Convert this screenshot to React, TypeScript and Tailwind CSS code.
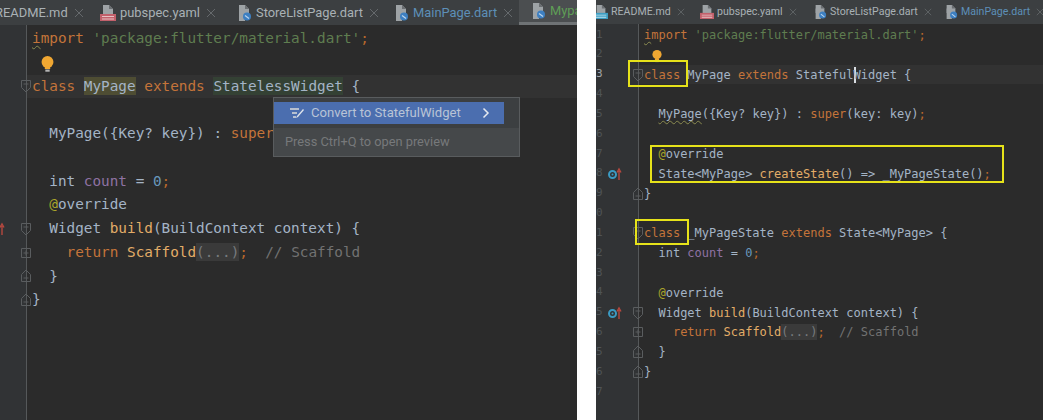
import type { ReactNode } from 'react'

const Kw = ({ children }: { children: ReactNode }) => <span className="text-[#c4743a]">{children}</span>
const Fn = ({ children }: { children: ReactNode }) => <span className="text-[#e3ad68]">{children}</span>
const Str = ({ children }: { children: ReactNode }) => <span className="text-[#5f7d50]">{children}</span>
const Semi = () => <span className="text-[#b8692c]">;</span>
const At = () => <span className="text-[#a9a52b]">@</span>
const Field = ({ children }: { children: ReactNode }) => <span className="text-[#8f72a3]">{children}</span>
const Num = ({ children }: { children: ReactNode }) => <span className="text-[#6897bb]">{children}</span>
const Squiggle = ({ children }: { children: ReactNode }) => (
  <span className="underline decoration-wavy decoration-[#8a8a50] decoration-1 underline-offset-2">{children}</span>
)

type FoldKind = 'open' | 'close' | 'plus'

function Fold({ kind }: { kind: FoldKind }) {
  return (
    <svg width="12" height="14" viewBox="0 0 12 14" fill="none" stroke="#5a5d5f" strokeWidth="1">
      {kind === 'open' && <path d="M1.5 1.5h9v7l-4.500 4.500-4.500-4.500z" />}
      {kind === 'close' && <path d="M1.500 12.500h9v-7l-4.500-4.500-4.500 4.500z" />}
      {kind === 'plus' && <path d="M1.500 2.500h9v9h-9z" />}
      {kind === 'open' && <path d="M3.500 5h5" />}
      {kind === 'close' && <path d="M3.500 9h5" />}
      {kind === 'plus' && <path d="M3.500 7h5M6 4.500v5" />}
    </svg>
  )
}

function Bulb({ size }: { size: number }) {
  return (
    <svg width={size} height={size * 1.25} viewBox="0 0 12 15" className="inline-block align-middle">
      <circle cx="6" cy="5.500" r="5.500" fill="#f0a732" />
      <path d="M3.500 10h5v2h-5z" fill="#f0a732" />
      <path d="M4 12.500h4v2h-4z" fill="#b5b5b5" />
    </svg>
  )
}

function OverrideMark() {
  return (
    <svg width="14" height="14" viewBox="0 0 14 14">
      <circle cx="4.500" cy="7.500" r="3.500" fill="none" stroke="#3b9ac2" strokeWidth="2" />
      <circle cx="4.500" cy="7.500" r="1" fill="#3b9ac2" />
      <path d="M11 13V4M9 5.500 11 2l2 3.500" fill="none" stroke="#b5483f" strokeWidth="1.400" />
    </svg>
  )
}

function CloseX({ size }: { size: number }) {
  return (
    <svg width={size} height={size} viewBox="0 0 10 10" fill="none" stroke="#65696c" strokeWidth="1" className="shrink-0">
      <path d="M1 1l8 8M9 1l-8 8" />
    </svg>
  )
}

function FileIcon({ kind, size }: { kind: 'dart' | 'yml' | 'md'; size: number }) {
  return (
    <svg width={size} height={size} viewBox="0 0 16 16" className="shrink-0">
      <path d="M3 0h6l4 4v5H3z" fill="#9ea3a6" />
      <path d="M9 0v4h4z" fill="#6b6f72" />
      {kind === 'dart' && (
        <>
          <path d="M3 4h6v12H3z" fill="#9ea3a6" />
          <circle cx="11" cy="11.500" r="4" fill="#3d7fc1" />
          <path d="M9 10.500l4 3" stroke="#bcd6ee" strokeWidth="1.200" />
        </>
      )}
      {kind === 'yml' && (
        <>
          <path d="M0 9h16v7H0z" fill="#c2606b" />
          <path d="M2 11h12v1H2zM2 13.500h12v1H2z" fill="#e9c0c4" />
        </>
      )}
      {kind === 'md' && (
        <>
          <path d="M0 9h16v7H0z" fill="#3f9fc4" />
          <path d="M2 11h12v1H2zM2 13.500h12v1H2z" fill="#bfe3f0" />
        </>
      )}
    </svg>
  )
}

type Tab = {
  name: string
  icon: 'dart' | 'yml' | 'md'
  color?: string
  width: number
  closable?: boolean
  active?: boolean
}

function TabBar({ tabs, big, offset }: { tabs: Tab[]; big?: boolean; offset: number }) {
  return (
    <div
      className={`flex shrink-0 overflow-hidden bg-[#3c3f41] font-['Roboto',sans-serif] ${
        big ? 'h-[25px] text-[12.900px]' : 'h-[24px] text-[10.600px]'
      }`}
    >
      <div className="flex shrink-0" style={{ marginLeft: offset }}>
        {tabs.map((t) => (
          <div
            key={t.name}
            className={`flex shrink-0 items-center ${t.active ? 'border-b-[3px] border-[#6f7375] bg-[#4b4e50] pl-[11px]' : ''}`}
            style={{ width: t.width }}
          >
            <FileIcon kind={t.icon} size={big ? 16 : 14} />
            <span className={`whitespace-nowrap ${big ? 'ml-[4px]' : 'ml-[3px]'} ${t.color ?? 'text-[#a9b1b5]'}`}>{t.name}</span>
            {t.closable && (
              <span className="ml-[6px] flex">
                <CloseX size={big ? 10 : 8} />
              </span>
            )}
          </div>
        ))}
      </div>
    </div>
  )
}

type Row = {
  num?: string
  bright?: boolean
  mark?: boolean
  fold?: FoldKind
  current?: boolean
  code?: ReactNode
}

function CodeRows({
  rows,
  gutter,
  rowClass,
  topGap,
  numbers,
  cutMark,
}: {
  rows: Row[]
  gutter: string
  rowClass: string
  topGap: string
  numbers?: boolean
  cutMark?: boolean
}) {
  return (
    <div className="flex min-h-0 flex-1 flex-col font-['DejaVu_Sans_Mono',monospace] text-[#a4b4c6]">
      <div className="flex shrink-0">
        <div className={`shrink-0 border-r border-[#55585a] bg-[#313335] ${gutter} ${topGap}`} />
      </div>
      {rows.map((r, i) => (
        <div key={i} className={`flex shrink-0 ${rowClass} ${r.current ? 'bg-[#323232]' : ''}`}>
          <div className={`relative flex shrink-0 items-center border-r border-[#55585a] bg-[#313335] ${gutter}`}>
            {numbers && (
              <span className={`w-[13px] text-[11px] ${r.bright ? 'text-[#a4a8aa]' : 'text-[#4f5355]'}`}>{r.num}</span>
            )}
            {r.mark && (
              <span className={`flex ${cutMark ? 'absolute left-[-9px]' : 'absolute left-[12px]'}`}>
                <OverrideMark />
              </span>
            )}
            {r.fold && (
              <span className="absolute right-[-6px] flex">
                <Fold kind={r.fold} />
              </span>
            )}
          </div>
          <div className="flex items-center pl-[5px]">
            <span className="whitespace-pre">{r.code}</span>
          </div>
        </div>
      ))}
      <div className="flex min-h-0 flex-1">
        <div className={`shrink-0 border-r border-[#55585a] bg-[#313335] ${gutter}`} />
      </div>
    </div>
  )
}

const leftRows: Row[] = [
  { code: <><Kw><Squiggle>i</Squiggle>mport</Kw> <Str>'package:flutter/material.dart'</Str><Semi /></> },
  { code: <span className="ml-[9px] inline-flex translate-y-[5px]"><Bulb size={13} /></span> },
  {
    current: true,
    fold: 'open',
    code: (
      <>
        <Kw>class</Kw> <span className="bg-[#4e4d33] py-[1px]">MyPage</span> <Kw>extends</Kw>{' '}
        <span className="bg-[#344134] py-[1px]">StatelessWidget</span> {'{'}
      </>
    ),
  },
  {},
  { code: <>{'  '}MyPage({'{'}Key? key{'}'}) : <Kw>super</Kw></> },
  {},
  { code: <>{'  '}int <Field>count</Field> = <Num>0</Num><Semi /></> },
  { code: <>{'  '}<At />override</> },
  {
    mark: true,
    fold: 'open',
    code: <>{'  '}Widget <Fn>build</Fn>(BuildContext context) {'{'}</>,
  },
  {
    fold: 'plus',
    code: (
      <>
        {'    '}<Kw>return</Kw> <Fn>Scaffold</Fn>
        <span className="bg-[#3a3a3a] py-[1px] text-[#777b7e]">(...)</span><Semi />{'  '}
        <span className="text-[#727272]">// Scaffold</span>
      </>
    ),
  },
  { fold: 'close', code: <>{'  }'}</> },
  { fold: 'close', code: <>{'}'}</> },
]

const rightRows: Row[] = [
  { num: '1', code: <><Kw><Squiggle>i</Squiggle>mport</Kw> <Str>'package:flutter/material.dart'</Str><Semi /></> },
  { num: '2', code: <span className="ml-[8px] inline-flex translate-y-[4px]"><Bulb size={10} /></span> },
  {
    num: '3',
    bright: true,
    current: true,
    fold: 'open',
    code: (
      <>
        <Kw>class</Kw> MyPage <Kw>extends</Kw> Stateful
        <span className="-mr-[2px] inline-block h-[16px] w-0 border-l-2 border-[#d8dde2] align-middle" />
        Widget {'{'}
      </>
    ),
  },
  { num: '4' },
  { num: '5', code: <>{'  '}<Squiggle>MyPage</Squiggle>({'{'}Key? key{'}'}) : <Kw>super</Kw>(key: key)<Semi /></> },
  { num: '6' },
  { num: '7', code: <>{'  '}<At />override</> },
  { num: '8', mark: true, code: <>{'  '}State&lt;MyPage&gt; <Fn>createState</Fn>() =&gt; _MyPageState()<Semi /></> },
  { num: '9', fold: 'close', code: <>{'}'}</> },
  { num: '0' },
  { num: '1', fold: 'open', code: <><Kw>class</Kw> _MyPageState <Kw>extends</Kw> State&lt;MyPage&gt; {'{'}</> },
  { num: '2', code: <>{'  '}int <Field>count</Field> = <Num>0</Num><Semi /></> },
  { num: '3' },
  { num: '4', code: <>{'  '}<At />override</> },
  { num: '5', mark: true, fold: 'open', code: <>{'  '}Widget <Fn>build</Fn>(BuildContext context) {'{'}</> },
  {
    num: '6',
    fold: 'plus',
    code: (
      <>
        {'    '}<Kw>return</Kw> <Fn>Scaffold</Fn>
        <span className="bg-[#3a3a3a] py-[1px] text-[#777b7e]">(...)</span><Semi />{'  '}
        <span className="text-[#727272]">// Scaffold</span>
      </>
    ),
  },
  { num: '5', fold: 'close', code: <>{'  }'}</> },
  { num: '6', fold: 'close', code: <>{'}'}</> },
  { num: '7' },
]

const leftTabs: Tab[] = [
  { name: 'README.md', icon: 'md', width: 125, closable: true },
  { name: 'pubspec.yaml', icon: 'yml', width: 136, closable: true },
  { name: 'StoreListPage.dart', icon: 'dart', width: 157, closable: true },
  { name: 'MainPage.dart', icon: 'dart', width: 126, color: 'text-[#5d8fb8]', closable: true },
  { name: 'Mypage.dart', icon: 'dart', width: 100, color: 'text-[#5f9e56]', active: true },
]

const rightTabs: Tab[] = [
  { name: 'README.md', icon: 'md', width: 106, closable: true },
  { name: 'pubspec.yaml', icon: 'yml', width: 113, closable: true },
  { name: 'StoreListPage.dart', icon: 'dart', width: 131, closable: true },
  { name: 'MainPage.dart', icon: 'dart', width: 110, color: 'text-[#5d8fb8]', closable: true },
]

function IntentionPopup() {
  return (
    <div className="absolute left-[273px] top-[97px] w-[247px] border border-[#595c5e] bg-[#3c3f41] font-['Roboto',sans-serif]">
      <div className="py-[4px]">
        <div className="flex h-[22px] w-[230px] items-center bg-[#4b6eaf] text-[13.100px] text-[#b9c4d6]">
          <svg width="14" height="12" viewBox="0 0 14 12" className="ml-[16px] shrink-0">
            <path d="M0 1h9v2H0zM2 5h5v2H2zM3 9h3v2H3z" fill="#b7c0cf" />
            <path d="M7 9l6-7 1 1-6 7-2 1z" fill="#dfe4ec" />
          </svg>
          <span className="ml-[7px] whitespace-nowrap">Convert to StatefulWidget</span>
          <svg width="8" height="12" viewBox="0 0 8 12" className="ml-auto mr-[14px] shrink-0" fill="none" stroke="#e6eaf0" strokeWidth="1.500">
            <path d="M1.500 1.500 6 6l-4.500 4.500" />
          </svg>
        </div>
      </div>
      <div className="flex h-[28px] items-center bg-[#45484a] pl-[11px] text-[12.800px] text-[#77797b]">
        Press Ctrl+Q to open preview
      </div>
    </div>
  )
}

export default function App() {
  return (
    <div className="flex h-[420px] w-[1043px] overflow-hidden bg-white">
      {/* Left: before the intention action */}
      <div className="relative flex w-[577px] shrink-0 flex-col overflow-hidden bg-[#2b2b2b]">
        <TabBar tabs={leftTabs} big offset={-25} />
        <CodeRows
          rows={leftRows}
          gutter="w-[27px]"
          rowClass="h-[23.75px] text-[14.35px]"
          topGap="h-[2px]"
          cutMark
        />
        <IntentionPopup />
      </div>

      <div className="w-[19px] shrink-0" />

      {/* Right: after converting */}
      <div className="relative flex min-w-0 flex-1 flex-col overflow-hidden bg-[#2b2b2b]">
        <TabBar tabs={rightTabs} offset={-2} />
        <CodeRows
          rows={rightRows}
          gutter="w-[43px]"
          rowClass="h-[19.83px] text-[12px]"
          topGap="h-[1px]"
          numbers
        />
        <div className="absolute left-[32px] top-[60px] h-[27px] w-[60px] border-2 border-[#e6e21a]" />
        <div className="absolute left-[54px] top-[145px] h-[38px] w-[354px] border-2 border-[#e6e21a]" />
        <div className="absolute left-[39px] top-[219px] h-[26px] w-[54px] border-2 border-[#e6e21a]" />
      </div>
    </div>
  )
}
